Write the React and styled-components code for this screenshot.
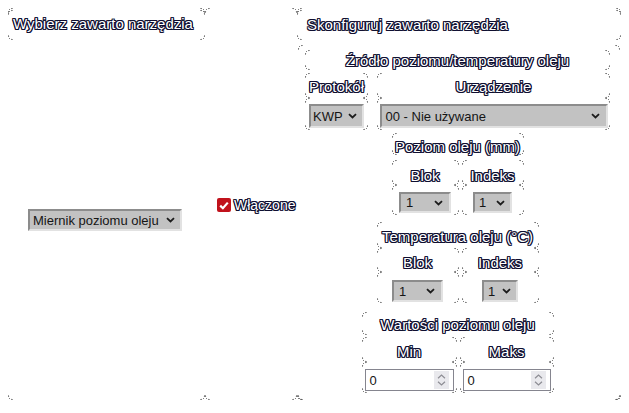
import React from 'react';
import styled, { createGlobalStyle, css } from 'styled-components';

const GlobalStyle = createGlobalStyle`
  html, body { margin: 0; padding: 0; background: #ffffff; }
  body { font-family: "Liberation Sans", Arial, sans-serif; }
`;

const mark = (d) =>
  `url("data:image/svg+xml,${encodeURIComponent(
    `<svg xmlns='http://www.w3.org/2000/svg' width='5' height='5'><path d='${d}' fill='none' stroke='#3c3c3c' stroke-width='1' stroke-dasharray='1.2 1.4'/></svg>`
  )}")`;

const TL = mark('M0.5 4.5 Q0.5 0.5 4.5 0.5');
const TR = mark('M0.5 0.5 Q4.5 0.5 4.5 4.5');
const BL = mark('M0.5 0.5 Q0.5 4.5 4.5 4.5');
const BR = mark('M4.5 0.5 Q4.5 4.5 0.5 4.5');

const corners = css`
  background-image: ${TL}, ${TR}, ${BL}, ${BR};
  background-position: left top, right top, left bottom, right bottom;
  background-repeat: no-repeat;
`;

const ink = '#0e0e30';

const outlineText = css`
  color: #ffffff;
  text-shadow: -1px 0 ${ink}, 1px 0 ${ink}, 0 -1px ${ink}, 0 1px ${ink},
    -1px -1px ${ink}, 1px 1px ${ink}, -1px 1px ${ink}, 1px -1px ${ink};
  white-space: nowrap;
`;

const Page = styled.div`
  box-sizing: border-box;
  width: 629px;
  height: 413px;
  padding: 8px 8px 0;
  display: grid;
  grid-template-columns: 197px 92px 324px;
  align-items: start;
`;

const Column = styled.div`
  ${corners};
  box-sizing: border-box;
  height: 392px;
  padding-top: 2px;
  display: flex;
  flex-direction: column;
`;

const Cell = styled.div`
  ${corners};
  ${outlineText};
  box-sizing: border-box;
  height: ${(p) => p.$h}px;
  padding-top: ${(p) => p.$pt}px;
  padding-left: ${(p) => p.$pl || 0}px;
  display: flex;
  justify-content: ${(p) => (p.$left ? 'flex-start' : 'center')};
  align-items: flex-start;
  font-size: ${(p) => p.$size || 15}px;
  line-height: 17px;
`;

const Centered = styled.div`
  flex: 1;
  display: flex;
  align-items: center;
  justify-content: ${(p) => p.$justify || 'center'};
  padding-right: ${(p) => p.$pr || 0}px;
  padding-left: ${(p) => p.$pl || 0}px;
`;

const Group = styled.div`
  ${corners};
  box-sizing: border-box;
  margin: 5px 1px 0 1px;
  padding: 5px 10px 7px 7px;
  display: flex;
  flex-direction: column;
  align-items: center;
`;

const SubGroup = styled.div`
  width: ${(p) => p.$w}px;
  margin-top: ${(p) => p.$mt}px;
  display: flex;
  flex-direction: column;
`;

const TwoCol = styled.div`
  align-self: stretch;
  display: grid;
  grid-template-columns: ${(p) => p.$cols};
  column-gap: ${(p) => p.$gap}px;
  margin-top: ${(p) => p.$mt || 0}px;
`;

const SelectBox = styled.div`
  box-sizing: border-box;
  flex: none;
  width: ${(p) => p.$w}px;
  height: ${(p) => p.$h}px;
  background: #c2c2c2;
  border-style: solid;
  border-width: 2px;
  border-color: #8c8c8c #e2e2e2 #e2e2e2 #8c8c8c;
  display: flex;
  align-items: center;
  justify-content: space-between;
  padding: 0 ${(p) => p.$pr ?? 6}px 0 ${(p) => p.$pl ?? 4}px;
  font-size: 13px;
  color: #151515;
  text-shadow: none;
  white-space: nowrap;
`;

const Chevron = () => (
  <svg width="9" height="6" viewBox="0 0 9 6">
    <path d="M1 1.2 L4.5 4.5 L8 1.2" fill="none" stroke="#1b1b1b" strokeWidth="1.8" />
  </svg>
);

const Select = ({ w, h, pr, pl, children }) => (
  <SelectBox $w={w} $h={h} $pr={pr} $pl={pl}>
    <span>{children}</span>
    <Chevron />
  </SelectBox>
);

const NumberBox = styled.div`
  box-sizing: border-box;
  flex: none;
  width: ${(p) => p.$w}px;
  height: 22px;
  border: 1px solid #85858f;
  background: #ffffff;
  display: flex;
  align-items: center;
  padding-left: 4px;
  font-size: 13px;
  color: #151515;
  text-shadow: none;
`;

const Spin = styled.div`
  margin-left: auto;
  margin-right: 4px;
  width: 15px;
  height: 18px;
  background: #e9e9ed;
  display: flex;
  flex-direction: column;
  align-items: center;
  justify-content: center;
  gap: 2px;
`;

const NumberInput = ({ w }) => (
  <NumberBox $w={w}>
    <span>0</span>
    <Spin>
      <svg width="9" height="5" viewBox="0 0 9 5">
        <path d="M1 4.2 L4.5 1 L8 4.2" fill="none" stroke="#8d8d94" strokeWidth="1.2" />
      </svg>
      <svg width="9" height="5" viewBox="0 0 9 5">
        <path d="M1 0.8 L4.5 4 L8 0.8" fill="none" stroke="#8d8d94" strokeWidth="1.2" />
      </svg>
    </Spin>
  </NumberBox>
);

const CheckRow = styled.label`
  display: flex;
  align-items: center;
  gap: 3px;
  ${outlineText};
  font-size: 14px;
  line-height: 17px;
`;

const CheckBox = styled.span`
  width: 14px;
  height: 14px;
  border-radius: 2px;
  background: #c1121c;
  display: inline-flex;
  align-items: center;
  justify-content: center;
`;

export default function App() {
  return (
    <>
      <GlobalStyle />
      <Page>
        <Column>
          <Cell $h={30} $pt={5} $pl={5} $left>Wybierz zawarto narzędzia</Cell>
          <Centered $pr={3}>
            <Select w={154} h={22} pr={5} pl={3}>Miernik poziomu oleju</Select>
          </Centered>
        </Column>

        <Column>
          <Centered $justify="flex-start" $pl={12}>
            <CheckRow>
              <CheckBox>
                <svg width="10" height="9" viewBox="0 0 10 9">
                  <path d="M1.2 4.6 L3.9 7.2 L8.8 1.6" fill="none" stroke="#ffffff" strokeWidth="2.2" />
                </svg>
              </CheckBox>
              Włączone
            </CheckRow>
          </Centered>
        </Column>

        <Column>
          <Cell $h={30} $pt={6} $pl={10} $left>Skonfiguruj zawarto narzędzia</Cell>
          <Group>
            <SubGroup $w={305} $mt={0}>
              <Cell $h={20} $pt={2}>Źródło poziomu/temperatury oleju</Cell>
              <TwoCol $cols="63px 233px" $gap={9} $mt={3}>
                <Cell $h={25} $pt={5}>Protokół</Cell>
                <Cell $h={25} $pt={5}>Urządzenie</Cell>
                <Cell $h={32} $pt={6}>
                  <Select w={55} h={24} pl={2} pr={5}>KWP</Select>
                </Cell>
                <Cell $h={32} $pt={6}>
                  <Select w={228} h={24} pl={4}>00 - Nie używane</Select>
                </Cell>
              </TwoCol>
            </SubGroup>

            <SubGroup $w={132} $mt={3}>
              <Cell $h={22} $pt={5}>Poziom oleju (mm)</Cell>
              <TwoCol $cols="67px 62px" $gap={3} $mt={5}>
                <Cell $h={25} $pt={7}>Blok</Cell>
                <Cell $h={25} $pt={7}>Indeks</Cell>
                <Cell $h={30} $pt={7}>
                  <Select w={52} h={21} pl={5}>1</Select>
                </Cell>
                <Cell $h={30} $pt={7}>
                  <Select w={39} h={21} pr={5}>1</Select>
                </Cell>
              </TwoCol>
            </SubGroup>

            <SubGroup $w={162} $mt={7}>
              <Cell $h={26} $pt={6}>Temperatura oleju (°C)</Cell>
              <TwoCol $cols="82px 77px" $gap={3}>
                <Cell $h={24} $pt={6}>Blok</Cell>
                <Cell $h={24} $pt={6}>Indeks</Cell>
                <Cell $h={31} $pt={8}>
                  <Select w={51} h={22} pl={5}>1</Select>
                </Cell>
                <Cell $h={31} $pt={8}>
                  <Select w={36} h={22} pr={5}>1</Select>
                </Cell>
              </TwoCol>
            </SubGroup>

            <SubGroup $w={192} $mt={9}>
              <Cell $h={23} $pt={4}>Wartości poziomu oleju</Cell>
              <TwoCol $cols="95px 94px" $gap={3} $mt={2}>
                <Cell $h={25} $pt={6}>Min</Cell>
                <Cell $h={25} $pt={6}>Maks</Cell>
                <Cell $h={31} $pt={7}>
                  <NumberInput w={89} />
                </Cell>
                <Cell $h={31} $pt={7}>
                  <NumberInput w={88} />
                </Cell>
              </TwoCol>
            </SubGroup>
          </Group>
        </Column>
      </Page>
    </>
  );
}
